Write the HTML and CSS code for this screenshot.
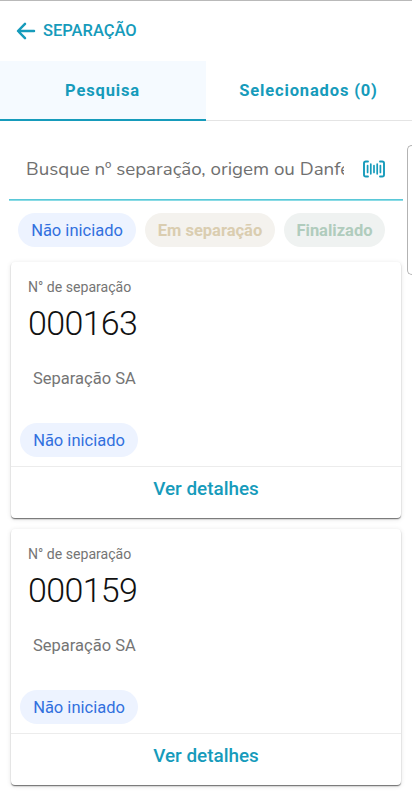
FILE: index.html
```html
<!DOCTYPE html>
<html lang="pt-BR">
<head>
<meta charset="utf-8">
<meta name="viewport" content="width=device-width, initial-scale=1">
<title>Separação</title>
<link rel="stylesheet" href="styles.css">
</head>
<body>
<header class="topbar">
  <svg class="back" viewBox="0 0 20 18" width="20" height="18"><path d="M9 1.8 2 9l7 7.2M2.2 9H18"/></svg>
  <h1 class="title">SEPARAÇÃO</h1>
</header>
<nav class="tabs">
  <a class="tab active"><span>Pesquisa</span></a>
  <a class="tab"><span>Selecionados (0)</span></a>
</nav>
<div class="slides">
  <section class="slide">
    <div class="search">
      <div class="placeholder">Busque nº separação, origem ou Danfe</div>
      <svg class="barcode" viewBox="0 0 22 18" width="22" height="18"><path class="frame" d="M5 1.5H2.8Q1 1.5 1 3.3V14.7Q1 16.5 2.8 16.5H5M17 1.5h2.2Q21 1.5 21 3.3V14.7Q21 16.5 19.2 16.5H17"/><path class="bars" d="M4.6 5.5v7M7.8 4.2v9.6M11 5.5v7M14.2 4.2v9.6M17.4 5.5v7"/></svg>
    </div>
    <div class="filters">
      <span class="chip">Não iniciado</span>
      <span class="chip progress">Em separação</span>
      <span class="chip done">Finalizado</span>
    </div>
  </section>
  <section class="slide next"></section>
</div>
<main class="list">
  <article class="card">
    <div class="body">
      <div class="label">N° de separação</div>
      <div class="number">000163</div>
      <div class="type">Separação SA</div>
      <span class="chip">Não iniciado</span>
    </div>
    <a class="details"><span>Ver detalhes</span></a>
  </article>
  <article class="card">
    <div class="body">
      <div class="label">N° de separação</div>
      <div class="number">000159</div>
      <div class="type">Separação SA</div>
      <span class="chip">Não iniciado</span>
    </div>
    <a class="details"><span>Ver detalhes</span></a>
  </article>
</main>
</body>
</html>
```
FILE: styles.css
```css
* { box-sizing: border-box; }
body {
  margin: 0;
  height: 795px;
  overflow: hidden;
  background: #fff;
  border-top: 1px solid #b9b9b9;
  font-family: Roboto, sans-serif;
  color: #757575;
}
.topbar {
  height: 60px;
  display: flex;
  align-items: center;
  gap: 7px;
  padding-left: 16px;
}
.back { fill: none; stroke: #169bbb; stroke-width: 2.5; stroke-linecap: round; stroke-linejoin: round; }
.title { margin: 0; font-size: 16.5px; font-weight: 500; line-height: 20px; color: #169bbb; }
.tabs { display: flex; height: 60px; }
.tab {
  flex: 1;
  display: flex;
  align-items: center;
  justify-content: center;
  border-bottom: 1px solid #e4e4e4;
  font-size: 16.5px;
  font-weight: 700;
  letter-spacing: .85px;
  color: #169bbb;
}
.tab span { margin-right: 1px; }
.tab.active { background: #f5faff; border-bottom: 2px solid #169bbb; }
.slides { display: flex; gap: 4px; height: 141px; padding-left: 9px; overflow-x: clip; }
.slide { flex: 0 0 394px; }
.slide.next { flex-basis: 20px; margin-top: 24px; height: 130px; border: 1px solid #b3b3b3; border-right: 0; border-radius: 5px 0 0 5px; background: #fff; }
.search {
  height: 79px;
  display: flex;
  align-items: center;
  padding: 18px 18px 0 17px;
  border-bottom: 1px solid #5ac8d8;
  box-shadow: 0 1px 0 #8adbe5;
}
.placeholder {
  width: 318px;
  margin-right: 19px;
  overflow: hidden;
  white-space: nowrap;
  font-family: Nunito, Lato, sans-serif;
  font-size: 18.8px;
  line-height: 28px;
  color: #707070;
}
.barcode { fill: none; stroke: #169bbb; stroke-linecap: round; flex: none; }
.frame { stroke-width: 1.9; }
.bars { stroke-width: 1.7; }
.filters { display: flex; gap: 9px; padding: 13px 0 0 9px; }
.chip {
  display: inline-flex;
  align-items: center;
  justify-content: center;
  width: 118px;
  height: 34px;
  border-radius: 17px;
  background: #edf3ff;
  color: #3270de;
  font-size: 16.5px;
}
.chip.progress { width: 130px; background: #f4f2ee; color: #dacdb0; font-weight: 700; }
.chip.done { width: 101px; background: #eff2f1; color: #b0ccbd; font-weight: 700; }
.list { display: grid; gap: 11px; padding: 0 11px; }
.card {
  height: 256px;
  border-radius: 4px;
  background: #fff;
  box-shadow: 0 1px 1px rgba(0,0,0,.4), 0 2px 2px -1px rgba(0,0,0,.25), 0 1px 5px rgba(0,0,0,.12);
}
.body { height: 205px; padding: 16px 9px 0; border-bottom: 1px solid #ececec; }
.label { padding-left: 8px; font-size: 14.1px; line-height: 18px; }
.number { margin-top: 6px; padding-left: 8px; font-size: 34px; line-height: 43px; letter-spacing: -.65px; font-weight: 300; color: #111; }
.type { margin: 24px 0 34px 13px; font-size: 16.5px; line-height: 20px; }
.details { display: flex; justify-content: center; padding-top: 9px; font-size: 18.9px; font-weight: 500; line-height: 25px; color: #169bbb; }
```
